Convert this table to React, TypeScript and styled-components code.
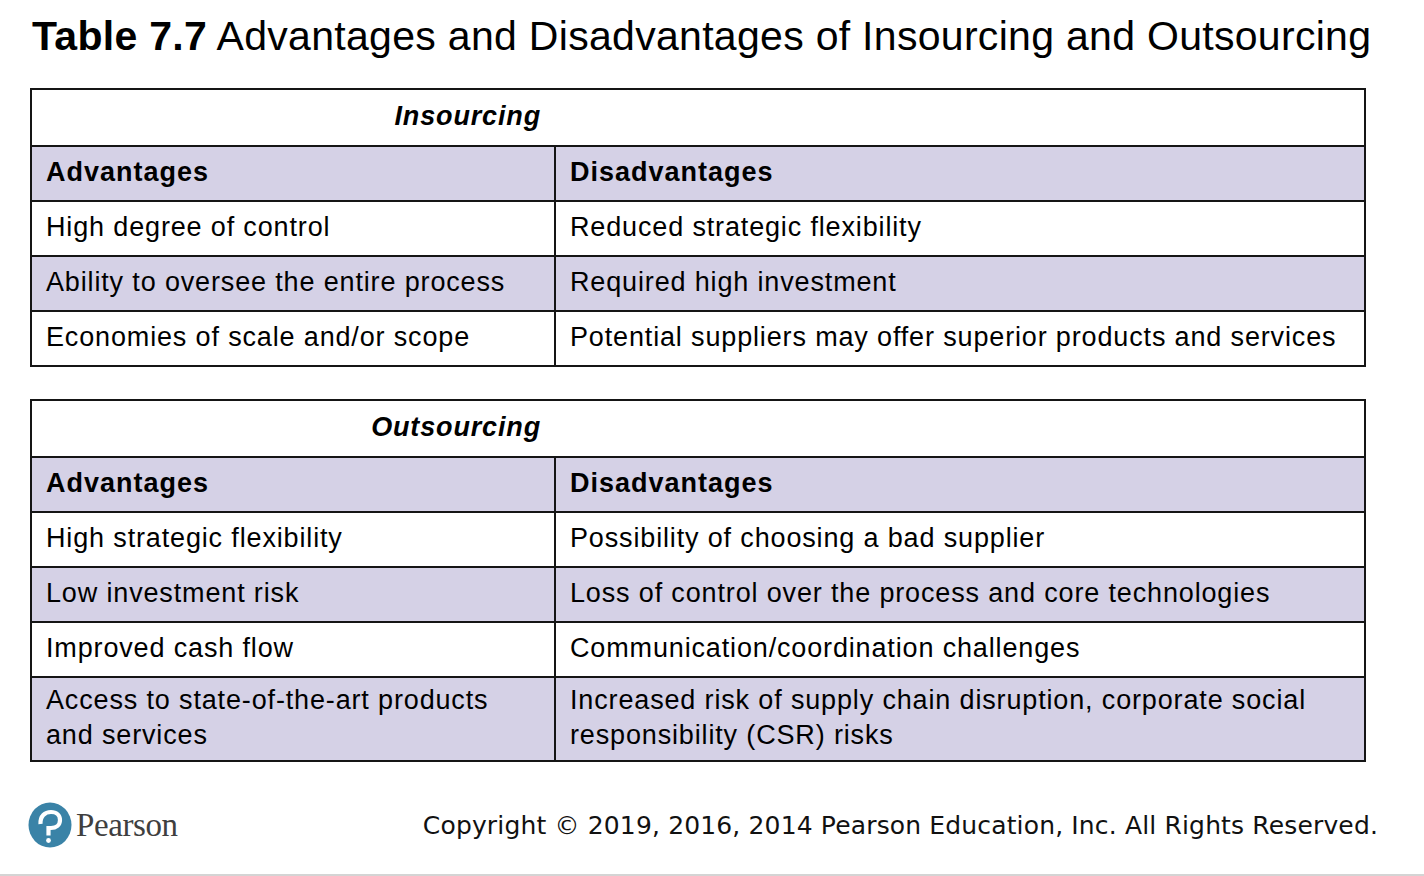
import React from "react";
import styled, { createGlobalStyle } from "styled-components";

// Page-wide reset: no body margin, white background
const GlobalStyle = createGlobalStyle`
  html, body {
    margin: 0;
    padding: 0;
    background: #ffffff;
  }
`;

const Page = styled.div`
  box-sizing: border-box;
  width: 1424px;
  height: 876px;
  padding: 13px 0 0 30px;
  border-bottom: 2px solid #d4d4d4;
  font-family: "Liberation Sans", Arial, sans-serif;
  color: #000;
  display: flex;
  flex-direction: column;
`;

const Title = styled.h1`
  margin: 0 0 29px 2px;
  font-size: 41px;
  line-height: 46px;
  font-weight: normal;
  letter-spacing: 0.3px;
  white-space: nowrap;
  b {
    font-weight: bold;
  }
`;

const Table = styled.table`
  width: 1336px;
  border-collapse: collapse;
  table-layout: fixed;
  margin-bottom: 32px;
  font-size: 27px;
  letter-spacing: 0.85px;
  td,
  th {
    border: 2px solid #151515;
    padding: 0 8px 2px 14px;
    text-align: left;
    vertical-align: middle;
  }
  td:first-child {
    padding-right: 30px;
  }
`;

const Caption = styled.th`
  height: 53px;
  font-style: italic;
  font-weight: bold;
  span {
    display: block;
    width: 495px;
    text-align: right;
  }
`;

const Row = styled.tr<{ $shaded?: boolean; $tall?: boolean }>`
  height: ${(p) => (p.$tall ? "84px" : "55px")};
  background: ${(p) => (p.$shaded ? "#d5d1e6" : "#ffffff")};
  td {
    line-height: 35px;
  }
`;

const HeadCell = styled.td`
  font-weight: bold;
  letter-spacing: 1px;
`;

const Footer = styled.footer`
  display: flex;
  align-items: center;
  justify-content: space-between;
  padding: 8px 46px 0 0;
`;

const Logo = styled.div`
  display: flex;
  align-items: center;
  gap: 4px;
  margin-left: -2px;
  span {
    font-family: "Liberation Serif", "Times New Roman", serif;
    font-size: 33px;
    color: #3f3f3f;
    letter-spacing: -0.4px;
  }
`;

const Copyright = styled.p`
  margin: 0;
  font-family: "DejaVu Sans", Verdana, sans-serif;
  font-size: 25px;
  letter-spacing: 0.15px;
  color: #111;
`;

interface Section {
  name: string;
  rows: [string, string][];
}

const sections: Section[] = [
  {
    name: "Insourcing",
    rows: [
      ["High degree of control", "Reduced strategic flexibility"],
      ["Ability to oversee the entire process", "Required high investment"],
      [
        "Economies of scale and/or scope",
        "Potential suppliers may offer superior products and services",
      ],
    ],
  },
  {
    name: "Outsourcing",
    rows: [
      ["High strategic flexibility", "Possibility of choosing a bad supplier"],
      [
        "Low investment risk",
        "Loss of control over the process and core technologies",
      ],
      ["Improved cash flow", "Communication/coordination challenges"],
      [
        "Access to state-of-the-art products and services",
        "Increased risk of supply chain disruption, corporate social responsibility (CSR) risks",
      ],
    ],
  },
];

// Pearson mark: blue disc with the white "P" / question-mark stroke
const PearsonMark = () => (
  <svg width="44" height="46" viewBox="0 0 44 46">
    <ellipse cx="22" cy="23" rx="21.5" ry="22.5" fill="#3a83a7" />
    <path
      d="M12.5 22 C12 14 17 10 23 10 C28.5 10 32 13.5 32 18 C32 23 28 26 23 26 L20.5 26 L20.5 33.5"
      stroke="#ffffff"
      strokeWidth="4.2"
      fill="none"
      strokeLinecap="butt"
    />
    <circle cx="20.5" cy="38.5" r="2.4" fill="#ffffff" />
  </svg>
);

const App: React.FC = () => {
  return (
    <>
      <GlobalStyle />
      <Page>
        <Title>
          <b>Table 7.7</b> Advantages and Disadvantages of Insourcing and
          Outsourcing
        </Title>

        {sections.map((section) => (
          <Table key={section.name}>
            <colgroup>
              <col style={{ width: 524 }} />
              <col />
            </colgroup>
            <tbody>
              <tr>
                <Caption colSpan={2}>
                  <span>{section.name}</span>
                </Caption>
              </tr>
              <Row $shaded>
                <HeadCell>Advantages</HeadCell>
                <HeadCell>Disadvantages</HeadCell>
              </Row>
              {section.rows.map(([adv, dis], i) => (
                <Row
                  key={adv}
                  $shaded={i % 2 === 1}
                  $tall={adv.length > 40 || dis.length > 62}
                >
                  <td>{adv}</td>
                  <td>{dis}</td>
                </Row>
              ))}
            </tbody>
          </Table>
        ))}

        <Footer>
          <Logo>
            <PearsonMark />
            <span>Pearson</span>
          </Logo>
          <Copyright>
            Copyright © 2019, 2016, 2014 Pearson Education, Inc. All Rights
            Reserved.
          </Copyright>
        </Footer>
      </Page>
    </>
  );
};

export default App;
